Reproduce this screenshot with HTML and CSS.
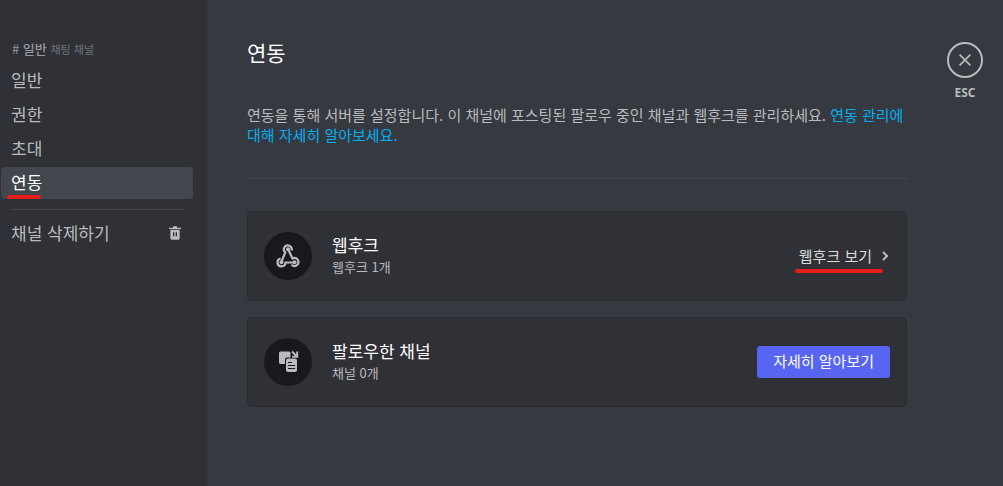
FILE: index.html
```html
<!DOCTYPE html>
<html lang="ko">
<head>
    <meta charset="UTF-8">
    <title>연동</title>
    <link rel="stylesheet" href="styles.css">
</head>
<body>
    <div class="settings">
        <nav class="sidebar">
            <h2 class="channel"># <span class="channel-name">일반</span> <small>채팅 채널</small></h2>
            <a class="item" href="#general">일반</a>
            <a class="item" href="#permissions">권한</a>
            <a class="item" href="#invites">초대</a>
            <a class="item selected" href="#integrations" aria-current="page"><span class="marked">연동</span></a>
            <hr>
            <button type="button" class="item delete">
                채널 삭제하기
                <svg width="16" height="16" viewBox="0 0 24 24" fill="currentColor">
                    <path d="M15 3.999V2H9v1.999H3v2h18v-2h-6z"/>
                    <path fill-rule="evenodd" d="M5 6.999v13.003C5 21.102 5.897 22 7 22h10c1.103 0 2-.898 2-1.998V6.999H5zM11 17H9v-6h2v6zm4 0h-2v-6h2v6z"/>
                </svg>
            </button>
        </nav>

        <main class="content">
            <h1>연동</h1>
            <p class="description">연동을 통해 서버를 설정합니다. 이 채널에 포스팅된 팔로우 중인 채널과 웹후크를 관리하세요. <a href="#help">연동 관리에 대해 자세히 알아보세요.</a></p>
            <hr>

            <section class="card">
                <div class="card-icon">
                    <svg width="24" height="24" viewBox="0 0 24 24" fill="none" stroke="currentColor" stroke-width="2.200">
                        <path d="M15.500 6.500A3.900 3.900 0 1 0 9.300 8.300L5.500 17.500"/>
                        <path d="M12 5L16.500 14.500A4 4 0 1 1 15.500 20.800"/>
                        <path d="M18.500 18.500H9.500A4 4 0 1 1 4.500 14.500"/>
                        <g fill="currentColor" stroke="none">
                            <circle cx="12" cy="5.300" r="2"/>
                            <circle cx="5.500" cy="18.300" r="2"/>
                            <circle cx="18.500" cy="18.300" r="2"/>
                        </g>
                    </svg>
                </div>
                <div class="card-text">
                    <h3>웹후크</h3>
                    <p>웹후크 1개</p>
                </div>
                <button type="button" class="view">
                    <span>웹후크 보기</span>
                    <svg width="6" height="10" viewBox="0 0 6 10" fill="none" stroke="currentColor" stroke-width="2">
                        <path d="M1 1l4 4-4 4"/>
                    </svg>
                </button>
            </section>

            <section class="card">
                <div class="card-icon">
                    <svg width="24" height="24" viewBox="0 0 24 24" fill="currentColor">
                        <path d="M4.500 1.500H13a1.500 1.500 0 0 1 1.500 1.500v4.500H11A2 2 0 0 0 9 9.500V14H4.500A1.500 1.500 0 0 1 3 12.500V3a1.500 1.500 0 0 1 1.500-1.500z"/>
                        <path fill-rule="evenodd" d="M12 8.500h7a2 2 0 0 1 2 2v9.500a2 2 0 0 1-2 2h-7a2 2 0 0 1-2-2v-9.500a2 2 0 0 1 2-2zM12 12v1h4v-1zM12 15v1h7v-1zM12 18v1h7v-1z"/>
                        <path d="M16 1.500l4.500 4.500M21.200 1.500v5.300h-5" fill="none" stroke="currentColor" stroke-width="2"/>
                    </svg>
                </div>
                <div class="card-text">
                    <h3>팔로우한 채널</h3>
                    <p>채널 0개</p>
                </div>
                <button type="button" class="primary">자세히 알아보기</button>
            </section>
        </main>

        <button type="button" class="close">
            <span class="close-ring">
                <svg width="18" height="18" viewBox="0 0 24 24" fill="currentColor">
                    <path d="M18.400 4L12 10.400 5.600 4 4 5.600 10.400 12 4 18.400 5.600 20 12 13.600 18.400 20 20 18.400 13.600 12 20 5.600z"/>
                </svg>
            </span>
            ESC
        </button>
    </div>
</body>
</html>
```
FILE: styles.css
```css
* {
    box-sizing: border-box;
}
body {
    margin: 0;
    font-family: "Noto Sans CJK KR", "Noto Sans", sans-serif;
    font-size: 15px;
    line-height: 20px;
    color: #b9bbbe;
    background-color: #36393f;
}
h1, h2, h3, p {
    margin: 0;
    font-weight: 400;
}
button {
    border: 0;
    padding: 0;
    font: inherit;
    color: inherit;
    background: none;
    cursor: pointer;
}
a {
    color: #00aff4;
    text-decoration: none;
}
hr {
    height: 1px;
    margin: 0;
    border: 0;
    background-color: #42454a;
}
svg {
    display: block;
}

.settings {
    display: flex;
    align-items: flex-start;
    min-height: 100vh;
}

/* Sidebar */
.sidebar {
    display: flex;
    flex-direction: column;
    gap: 2px;
    align-self: stretch;
    width: 207px;
    padding: 39px 14px 0 1px;
    background-color: #2f3136;
}
.channel {
    padding: 0 11px;
    margin-bottom: 4px;
    font-size: 13px;
    color: #96989d;
}
.channel-name {
    font-weight: 500;
}
.channel small {
    font-size: 11px;
    color: #72767d;
}
.item {
    display: flex;
    justify-content: space-between;
    align-items: center;
    height: 32px;
    padding: 0 10px 3px;
    border-radius: 4px;
    font-size: 17px;
    color: #b9bbbe;
}
.selected {
    color: #fff;
    background-color: #42464d;
}
.sidebar hr {
    margin: 8px 10px 6px;
}

/* Red underline that points at the next step */
.marked, .view {
    position: relative;
}
.marked::after, .view::after {
    content: "";
    position: absolute;
    left: -4px;
    right: 1px;
    bottom: -7px;
    height: 4px;
    border-radius: 2px;
    background-color: #e81b1b;
}
.view::after {
    right: 7px;
}

/* Content */
.content {
    flex: 1;
    max-width: 740px;
    margin: 0 40px;
    padding: 40px 0;
}
h1 {
    font-size: 21px;
    line-height: 24px;
    color: #fff;
}
.description {
    margin: 41px 0 33px;
}
.card {
    display: flex;
    align-items: center;
    gap: 20px;
    min-height: 90px;
    margin-top: 16px;
    padding: 16px;
    border: 1px solid #292b2f;
    border-radius: 5px;
    background-color: #2f3136;
}
hr + .card {
    margin-top: 32px;
}
.card-icon {
    display: flex;
    justify-content: center;
    align-items: center;
    width: 48px;
    height: 48px;
    border-radius: 50%;
    background-color: #18191c;
}
.card-text {
    flex: 1;
    padding-bottom: 2px;
}
.card h3 {
    font-size: 17px;
    line-height: 24px;
    color: #fff;
}
.card p {
    font-size: 13px;
}
.view {
    display: flex;
    align-items: center;
    gap: 10px;
    padding-right: 2px;
}
.view span {
    color: #dcddde;
}
.primary {
    height: 32px;
    padding: 0 16px 2px;
    border-radius: 3px;
    color: #fff;
    background-color: #5865f2;
}

/* Close button */
.close {
    display: flex;
    flex-direction: column;
    align-items: center;
    gap: 5px;
    margin: 42px 20px 0 0;
    font-family: "Noto Sans", sans-serif;
    font-size: 12px;
    font-weight: 700;
}
.close-ring {
    display: flex;
    justify-content: center;
    align-items: center;
    width: 36px;
    height: 36px;
    border: 2px solid #b9bbbe;
    border-radius: 50%;
}
```
